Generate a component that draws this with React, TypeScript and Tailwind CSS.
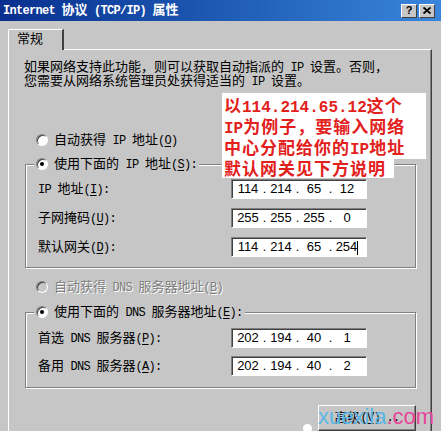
import { Fragment, type ReactNode } from 'react';

const ui = "font-['Liberation_Mono','Noto_Sans_CJK_SC',monospace]";

// SimSun-style text: half-width ASCII runs, "&X" marks the underlined access key
function S({ t }: { t: string }) {
    const runs = t.split(/([\x20-\x7e]+)/);
    return (
        <>
            {runs.map((run, i) =>
                i % 2 ? (
                    <span key={i} className="text-[12px] tracking-[-0.7px] whitespace-pre">
                        {run.split(/&(.)/).map((bit, j) =>
                            j % 2 ? (
                                <span key={j} className="underline underline-offset-[2px]">
                                    {bit}
                                </span>
                            ) : (
                                <Fragment key={j}>{bit}</Fragment>
                            ),
                        )}
                    </span>
                ) : (
                    <Fragment key={i}>{run}</Fragment>
                ),
            )}
        </>
    );
}

function Radio({ checked, disabled }: { checked?: boolean; disabled?: boolean }) {
    return (
        <div
            className={`w-[12px] h-[12px] rounded-full border border-t-[#808080] border-l-[#808080] border-b-white border-r-white shadow-[inset_1px_1px_0_#404040] flex items-center justify-center ${
                disabled ? 'bg-[#c6c6c6]' : 'bg-white'
            }`}
        >
            {checked && <div className="w-[4px] h-[4px] rounded-full bg-black" />}
        </div>
    );
}

function IpBox({ parts, caret }: { parts: string[]; caret?: boolean }) {
    return (
        <div className="h-[20px] w-[136px] bg-white border border-t-[#808080] border-l-[#808080] border-b-white border-r-white shadow-[inset_1px_1px_0_#404040] flex items-center pl-[2px] font-['Liberation_Sans',sans-serif] text-[13px] text-black">
            {parts.map((p, i) => (
                <Fragment key={i}>
                    {i > 0 && <span className="w-[5px] text-center">.</span>}
                    <span className="w-[28px] text-center whitespace-nowrap">
                        {p}
                        {caret && i === parts.length - 1 && (
                            <span className="inline-block w-px h-[14px] bg-black align-middle" />
                        )}
                    </span>
                </Fragment>
            ))}
        </div>
    );
}

function Row({ label, parts, caret }: { label: string; parts: string[]; caret?: boolean }) {
    return (
        <div className="grid grid-cols-[193px_136px] items-center h-[20px]">
            <span className="text-[13px] leading-none">
                <S t={label} />
            </span>
            <IpBox parts={parts} caret={caret} />
        </div>
    );
}

function GroupBox({ legend, height, children }: { legend: string; height: string; children: ReactNode }) {
    return (
        <div className={`relative ml-[16px] w-[391px] ${height} border border-[#808080] shadow-[inset_1px_1px_0_#fff,1px_1px_0_#fff]`}>
            <div className="absolute -top-[9px] left-[8px] h-[16px] px-[2px] bg-[#c6c6c6] flex items-center gap-[6px] text-[13px] leading-none">
                <Radio checked />
                <span>
                    <S t={legend} />
                </span>
            </div>
            {children}
        </div>
    );
}

export default function App() {
    return (
        <div className={`relative w-[441px] h-[431px] overflow-hidden bg-[#c6c6c6] text-black ${ui}`}>
            {/* Title bar */}
            <div className="h-[21px] flex items-center justify-between pl-[3px] pr-[6px] bg-linear-to-r from-[#0a2f8f] to-[#3a86dc]">
                <span className="text-white font-bold text-[13px] leading-none whitespace-nowrap">
                    <S t="Internet 协议 (TCP/IP) 属性" />
                </span>
                <div className="flex gap-[2px]">
                    <div className="w-[16px] h-[14px] bg-[#c6c6c6] border border-t-white border-l-white border-b-[#404040] border-r-[#404040] flex items-center justify-center font-['Liberation_Sans',sans-serif] font-bold text-[11px] leading-none">
                        ?
                    </div>
                    <div className="w-[16px] h-[14px] bg-[#c6c6c6] border border-t-white border-l-white border-b-[#404040] border-r-[#404040] flex items-center justify-center">
                        <svg width="8" height="7" viewBox="0 0 8 7">
                            <path d="M0.5 0.5 L7.5 6.5 M7.5 0.5 L0.5 6.5" stroke="#000" strokeWidth="1.8" />
                        </svg>
                    </div>
                </div>
            </div>

            <div className="pl-[8px] pt-[8px]">
                {/* Tab */}
                <div className="relative z-10 -mb-px h-[21px] w-[56px] bg-[#c6c6c6] border-l border-t border-white border-r-2 border-r-[#404040] rounded-tl-[2px] pl-[8px] pt-[2px] text-[13px] leading-[16px]">
                    常规
                </div>

                {/* Panel */}
                <div className="w-[424px] h-[400px] border-l border-t border-white border-r border-r-[#404040] shadow-[inset_-1px_0_0_#808080]">
                    <p className="mt-[11px] ml-[15px] text-[13px] leading-[13px]">
                        <S t="如果网络支持此功能，则可以获取自动指派的 IP 设置。否则，" />
                        <br />
                        <S t="您需要从网络系统管理员处获得适当的 IP 设置。" />
                    </p>

                    <div className="mt-[43px] ml-[27px] h-[16px] flex items-center gap-[6px] text-[13px] leading-none">
                        <Radio />
                        <span>
                            <S t="自动获得 IP 地址(&O)" />
                        </span>
                    </div>

                    <div className="mt-[16px]">
                        <GroupBox height="h-[104px]" legend="使用下面的 IP 地址(&S):">
                            <div className="pt-[14px] pl-[12px] flex flex-col gap-[9px]">
                                <Row label="IP 地址(&I):" parts={['114', '214', '65', '12']} />
                                <Row label="子网掩码(&U):" parts={['255', '255', '255', '0']} />
                                <Row label="默认网关(&D):" parts={['114', '214', '65', '254']} caret />
                            </div>
                        </GroupBox>
                    </div>

                    <div className="mt-[11px] ml-[27px] h-[16px] flex items-center gap-[6px] text-[13px] leading-none">
                        <Radio disabled />
                        <span className="text-[#808080] [text-shadow:1px_1px_0_#fff]">
                            <S t="自动获得 DNS 服务器地址(&B)" />
                        </span>
                    </div>

                    <div className="mt-[17px]">
                        <GroupBox height="h-[76px]" legend="使用下面的 DNS 服务器地址(&E):">
                            <div className="pt-[15px] pl-[12px] flex flex-col gap-[8px]">
                                <Row label="首选 DNS 服务器(&P):" parts={['202', '194', '40', '1']} />
                                <Row label="备用 DNS 服务器(&A):" parts={['202', '194', '40', '2']} />
                            </div>
                        </GroupBox>
                    </div>

                    <div className="mt-[17px] ml-[309px] w-[98px] h-[26px] bg-[#c6c6c6] border border-t-white border-l-white border-b-[#404040] border-r-[#404040] shadow-[inset_-1px_-1px_0_#808080] flex items-center justify-center text-[13px] leading-none">
                        <S t="高级(&V)..." />
                    </div>
                </div>
            </div>

            {/* Red annotation pasted over the dialog */}
            <div className="absolute left-[222px] top-[93px] font-['Noto_Sans_CJK_SC',sans-serif] font-bold text-[17px] leading-[18px] tracking-[1px] text-[#e2201c]">
                <div className="w-[204px] bg-white pt-[3px] pl-[2px]">
                    <div>
                        以<span className="font-['Liberation_Mono',monospace] text-[16px] tracking-normal">114.214.65.12</span>这个
                    </div>
                    <div>
                        <span className="font-['Liberation_Mono',monospace] text-[16px] tracking-normal">IP</span>为例子，要输入网络
                    </div>
                    <div>
                        中心分配给你的<span className="font-['Liberation_Mono',monospace] text-[16px] tracking-normal">IP</span>地址
                    </div>
                </div>
                <div className="w-[172px] bg-white pl-[2px] pb-[1px]">默认网关见下方说明</div>
            </div>

            {/* Watermark */}
            <div className="absolute left-[303px] top-[424px] w-[9px] h-[9px] rounded-full bg-white" />
            <div className="absolute left-[318px] top-[406px] font-['Liberation_Sans',sans-serif] text-[22px] leading-none whitespace-nowrap">
                <span className="text-[#5ab8e6]">xuexila</span>
                <span className="text-[#e8449c]">.com</span>
            </div>
        </div>
    );
}
